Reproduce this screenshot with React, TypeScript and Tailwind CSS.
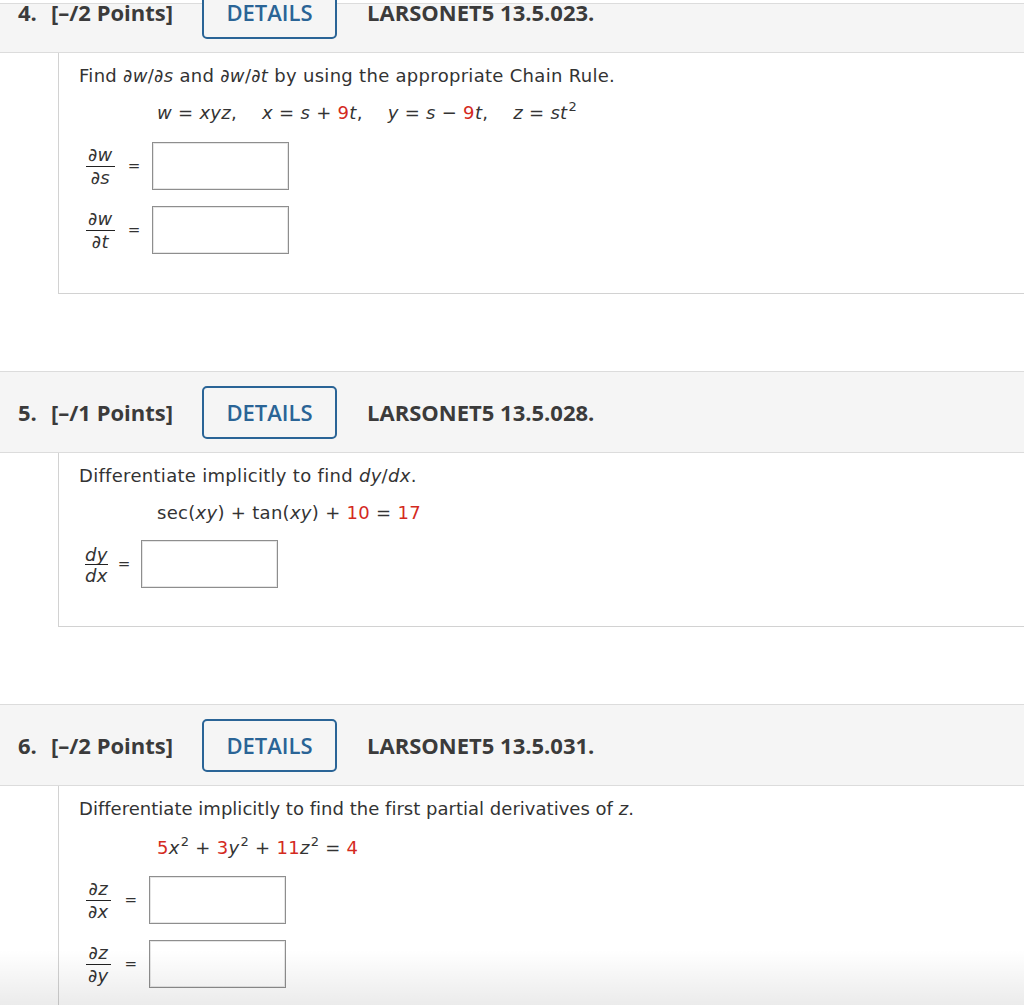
import React from "react";

const RED = "text-[#d42a1e]";

function Frac({ top, bottom, tight }: { top: React.ReactNode; bottom: React.ReactNode; tight?: boolean }) {
  return (
    <span className={tight ? "inline-flex flex-col items-center" : "inline-flex flex-col items-center px-[2px]"}>
      <span className={tight ? "leading-[19px]" : "leading-[22px] px-[2px]"}>{top}</span>
      <span className="block w-full border-t border-[#222]" />
      <span className={tight ? "leading-[22px]" : "leading-[22px] px-[2px]"}>{bottom}</span>
    </span>
  );
}

function AnswerRow({ label, gapL, gapR }: { label: React.ReactNode; gapL: string; gapR: string }) {
  return (
    <div className="flex items-center ml-[5px]">
      {label}
      <span className={`${gapL} ${gapR} text-[15px]`}>=</span>
      <div className="w-[137px] h-[48px] border border-[#8e8e8e] bg-white shadow-[inset_0_0_0_1px_#e6e6e6]" />
    </div>
  );
}

function Header({ num, pts, code }: { num: string; pts: string; code: string }) {
  return (
    <div className="flex items-center h-[82px] bg-[#f5f5f5] border-y border-[#dcdcdc] pl-[18px] font-['Open_Sans',sans-serif] text-[22px] text-[#3b3b3b]">
      <span className="font-bold w-[33px]">{num}</span>
      <span className="font-bold">{pts}</span>
      <button className="relative z-[2] ml-[29px] w-[135px] h-[53px] border-2 border-[#2a6496] rounded-[5px] text-[#2a6496] font-semibold bg-[#f5f5f5]">
        DETAILS
      </button>
      <span className="font-bold ml-[30px]">{code}</span>
    </div>
  );
}

function Body({ children, pb = "pb-[39px]" }: { children: React.ReactNode; pb?: string }) {
  return (
    <div className={`ml-[58px] border-l border-b border-[#d2d2d2] pl-[20px] pt-[12px] ${pb} font-['DejaVu_Sans',sans-serif] text-[18px] tracking-[0.3px] text-[#333] mb-[77px]`}>
      {children}
    </div>
  );
}

const Sup = () => <sup className="text-[13px] relative -top-[8px] ml-[1px]">2</sup>;

export default function App() {
  const sp = "mx-[6px]";
  return (
    <div className="relative h-[1005px] overflow-hidden bg-white">
      <div className="absolute top-0 left-0 right-0 h-[4px] bg-white border-b border-[#dcdcdc] z-[1]" />

      <div className="-mt-[29px]">
        <Header num="4." pts="[–/2 Points]" code="LARSONET5 13.5.023." />
        <Body>
          <p className="leading-[22px]">
            Find ∂<i>w</i>/∂<i>s</i> and ∂<i>w</i>/∂<i>t</i> by using the appropriate Chain Rule.
          </p>
          <p className="leading-[22px] mt-[15px] ml-[78px] whitespace-nowrap">
            <i>w</i><span className={sp}>=</span><i>xyz</i>,
            <span className="inline-block w-[25px]" />
            <i>x</i><span className={sp}>=</span><i>s</i><span className={sp}>+</span><span className={RED}>9</span><i>t</i>,
            <span className="inline-block w-[25px]" />
            <i>y</i><span className={sp}>=</span><i>s</i><span className={sp}>−</span><span className={RED}>9</span><i>t</i>,
            <span className="inline-block w-[25px]" />
            <i>z</i><span className={sp}>=</span><i>st</i><Sup />
          </p>
          <div className="mt-[18px] flex flex-col gap-[16px]">
            <AnswerRow label={<Frac top={<>∂<i>w</i></>} bottom={<>∂<i>s</i></>} />} gapL="ml-[11px]" gapR="mr-[11px]" />
            <AnswerRow label={<Frac top={<>∂<i>w</i></>} bottom={<>∂<i>t</i></>} />} gapL="ml-[11px]" gapR="mr-[11px]" />
          </div>
        </Body>
      </div>

      <Header num="5." pts="[–/1 Points]" code="LARSONET5 13.5.028." />
      <Body pb="pb-[38px]">
        <p className="leading-[22px]">
          Differentiate implicitly to find <i>dy</i>/<i>dx</i>.
        </p>
        <p className="leading-[22px] mt-[15px] ml-[78px] whitespace-nowrap">
          sec(<i>xy</i>)<span className={sp}>+</span>tan(<i>xy</i>)<span className={sp}>+</span>
          <span className={RED}>10</span><span className={sp}>=</span><span className={RED}>17</span>
        </p>
        <div className="mt-[16px] flex flex-col gap-[16px]">
          <AnswerRow label={<span className="ml-[1px]"><Frac tight top={<i>dy</i>} bottom={<i>dx</i>} /></span>} gapL="ml-[10px]" gapR="mr-[10px]" />
        </div>
      </Body>

      <Header num="6." pts="[–/2 Points]" code="LARSONET5 13.5.031." />
      <Body>
        <p className="leading-[22px] tracking-[0.02px]">
          Differentiate implicitly to find the first partial derivatives of <i>z</i>.
        </p>
        <p className="leading-[22px] mt-[17px] ml-[78px] whitespace-nowrap">
          <span className={RED}>5</span><i>x</i><Sup />
          <span className={sp}>+</span>
          <span className={RED}>3</span><i>y</i><Sup />
          <span className={sp}>+</span>
          <span className={RED}>11</span><i>z</i><Sup />
          <span className={sp}>=</span><span className={RED}>4</span>
        </p>
        <div className="mt-[17px] flex flex-col gap-[16px]">
          <AnswerRow label={<Frac top={<>∂<i>z</i></>} bottom={<>∂<i>x</i></>} />} gapL="ml-[12px]" gapR="mr-[12px]" />
          <AnswerRow label={<Frac top={<>∂<i>z</i></>} bottom={<>∂<i>y</i></>} />} gapL="ml-[12px]" gapR="mr-[12px]" />
        </div>
      </Body>

      <div className="pointer-events-none absolute bottom-0 left-0 right-0 h-[55px] bg-gradient-to-b from-transparent to-[#00000014]" />
    </div>
  );
}
